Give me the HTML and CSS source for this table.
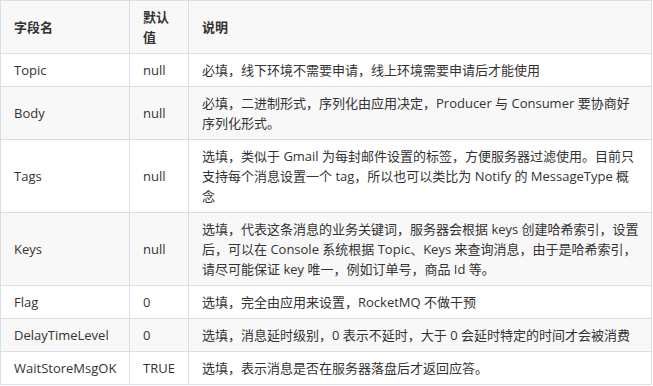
FILE: index.html
```html
<!DOCTYPE html>
<html lang="zh-CN">
<head>
<meta charset="utf-8">
<title>Message fields</title>
<link rel="stylesheet" href="styles.css">
</head>
<body>
<table class="fields">
  <colgroup>
    <col class="c-name">
    <col class="c-def">
    <col class="c-desc">
  </colgroup>
  <thead>
    <tr><th>字段名</th><th>默认值</th><th>说明</th></tr>
  </thead>
  <tbody>
    <tr><td>Topic</td><td>null</td><td>必填，线下环境不需要申请，线上环境需要申请后才能使用</td></tr>
    <tr><td>Body</td><td>null</td><td>必填，二进制形式，序列化由应用决定，Producer 与 Consumer 要协商好序列化形式。</td></tr>
    <tr><td>Tags</td><td>null</td><td>选填，类似于 Gmail 为每封邮件设置的标签，方便服务器过滤使用。目前只支持每个消息设置一个 tag，所以也可以类比为 Notify 的 MessageType 概念</td></tr>
    <tr><td>Keys</td><td>null</td><td>选填，代表这条消息的业务关键词，服务器会根据 keys 创建哈希索引，设置后，可以在 Console 系统根据 Topic、Keys 来查询消息，由于是哈希索引，请尽可能保证 key 唯一，例如订单号，商品 Id 等。</td></tr>
    <tr><td>Flag</td><td>0</td><td>选填，完全由应用来设置，RocketMQ 不做干预</td></tr>
    <tr><td>DelayTimeLevel</td><td>0</td><td>选填，消息延时级别，0 表示不延时，大于 0 会延时特定的时间才会被消费</td></tr>
    <tr><td>WaitStoreMsgOK</td><td>TRUE</td><td>选填，表示消息是否在服务器落盘后才返回应答。</td></tr>
  </tbody>
</table>
</body>
</html>
```

FILE: styles.css
```css
html, body {
  margin: 0;
  padding: 0;
  background: #ffffff;
}

.fields {
  border-collapse: collapse;
  table-layout: fixed;
  width: 652px;
  font-family: "Open Sans", "Noto Sans CJK SC", sans-serif;
  font-size: 13px;
  line-height: 20px;
  color: #333333;
}

.c-name { width: 129px; }
.c-def { width: 59px; }

.fields th,
.fields td {
  border: 1px solid #dcdfe2;
  padding: 6px 12px 6px 13px;
  text-align: left;
  vertical-align: middle;
}

.fields th {
  font-weight: bold;
}

.fields thead tr {
  background: #f8f8f8;
}

.fields tbody tr:nth-child(even) {
  background: #f8f8f8;
}
```
